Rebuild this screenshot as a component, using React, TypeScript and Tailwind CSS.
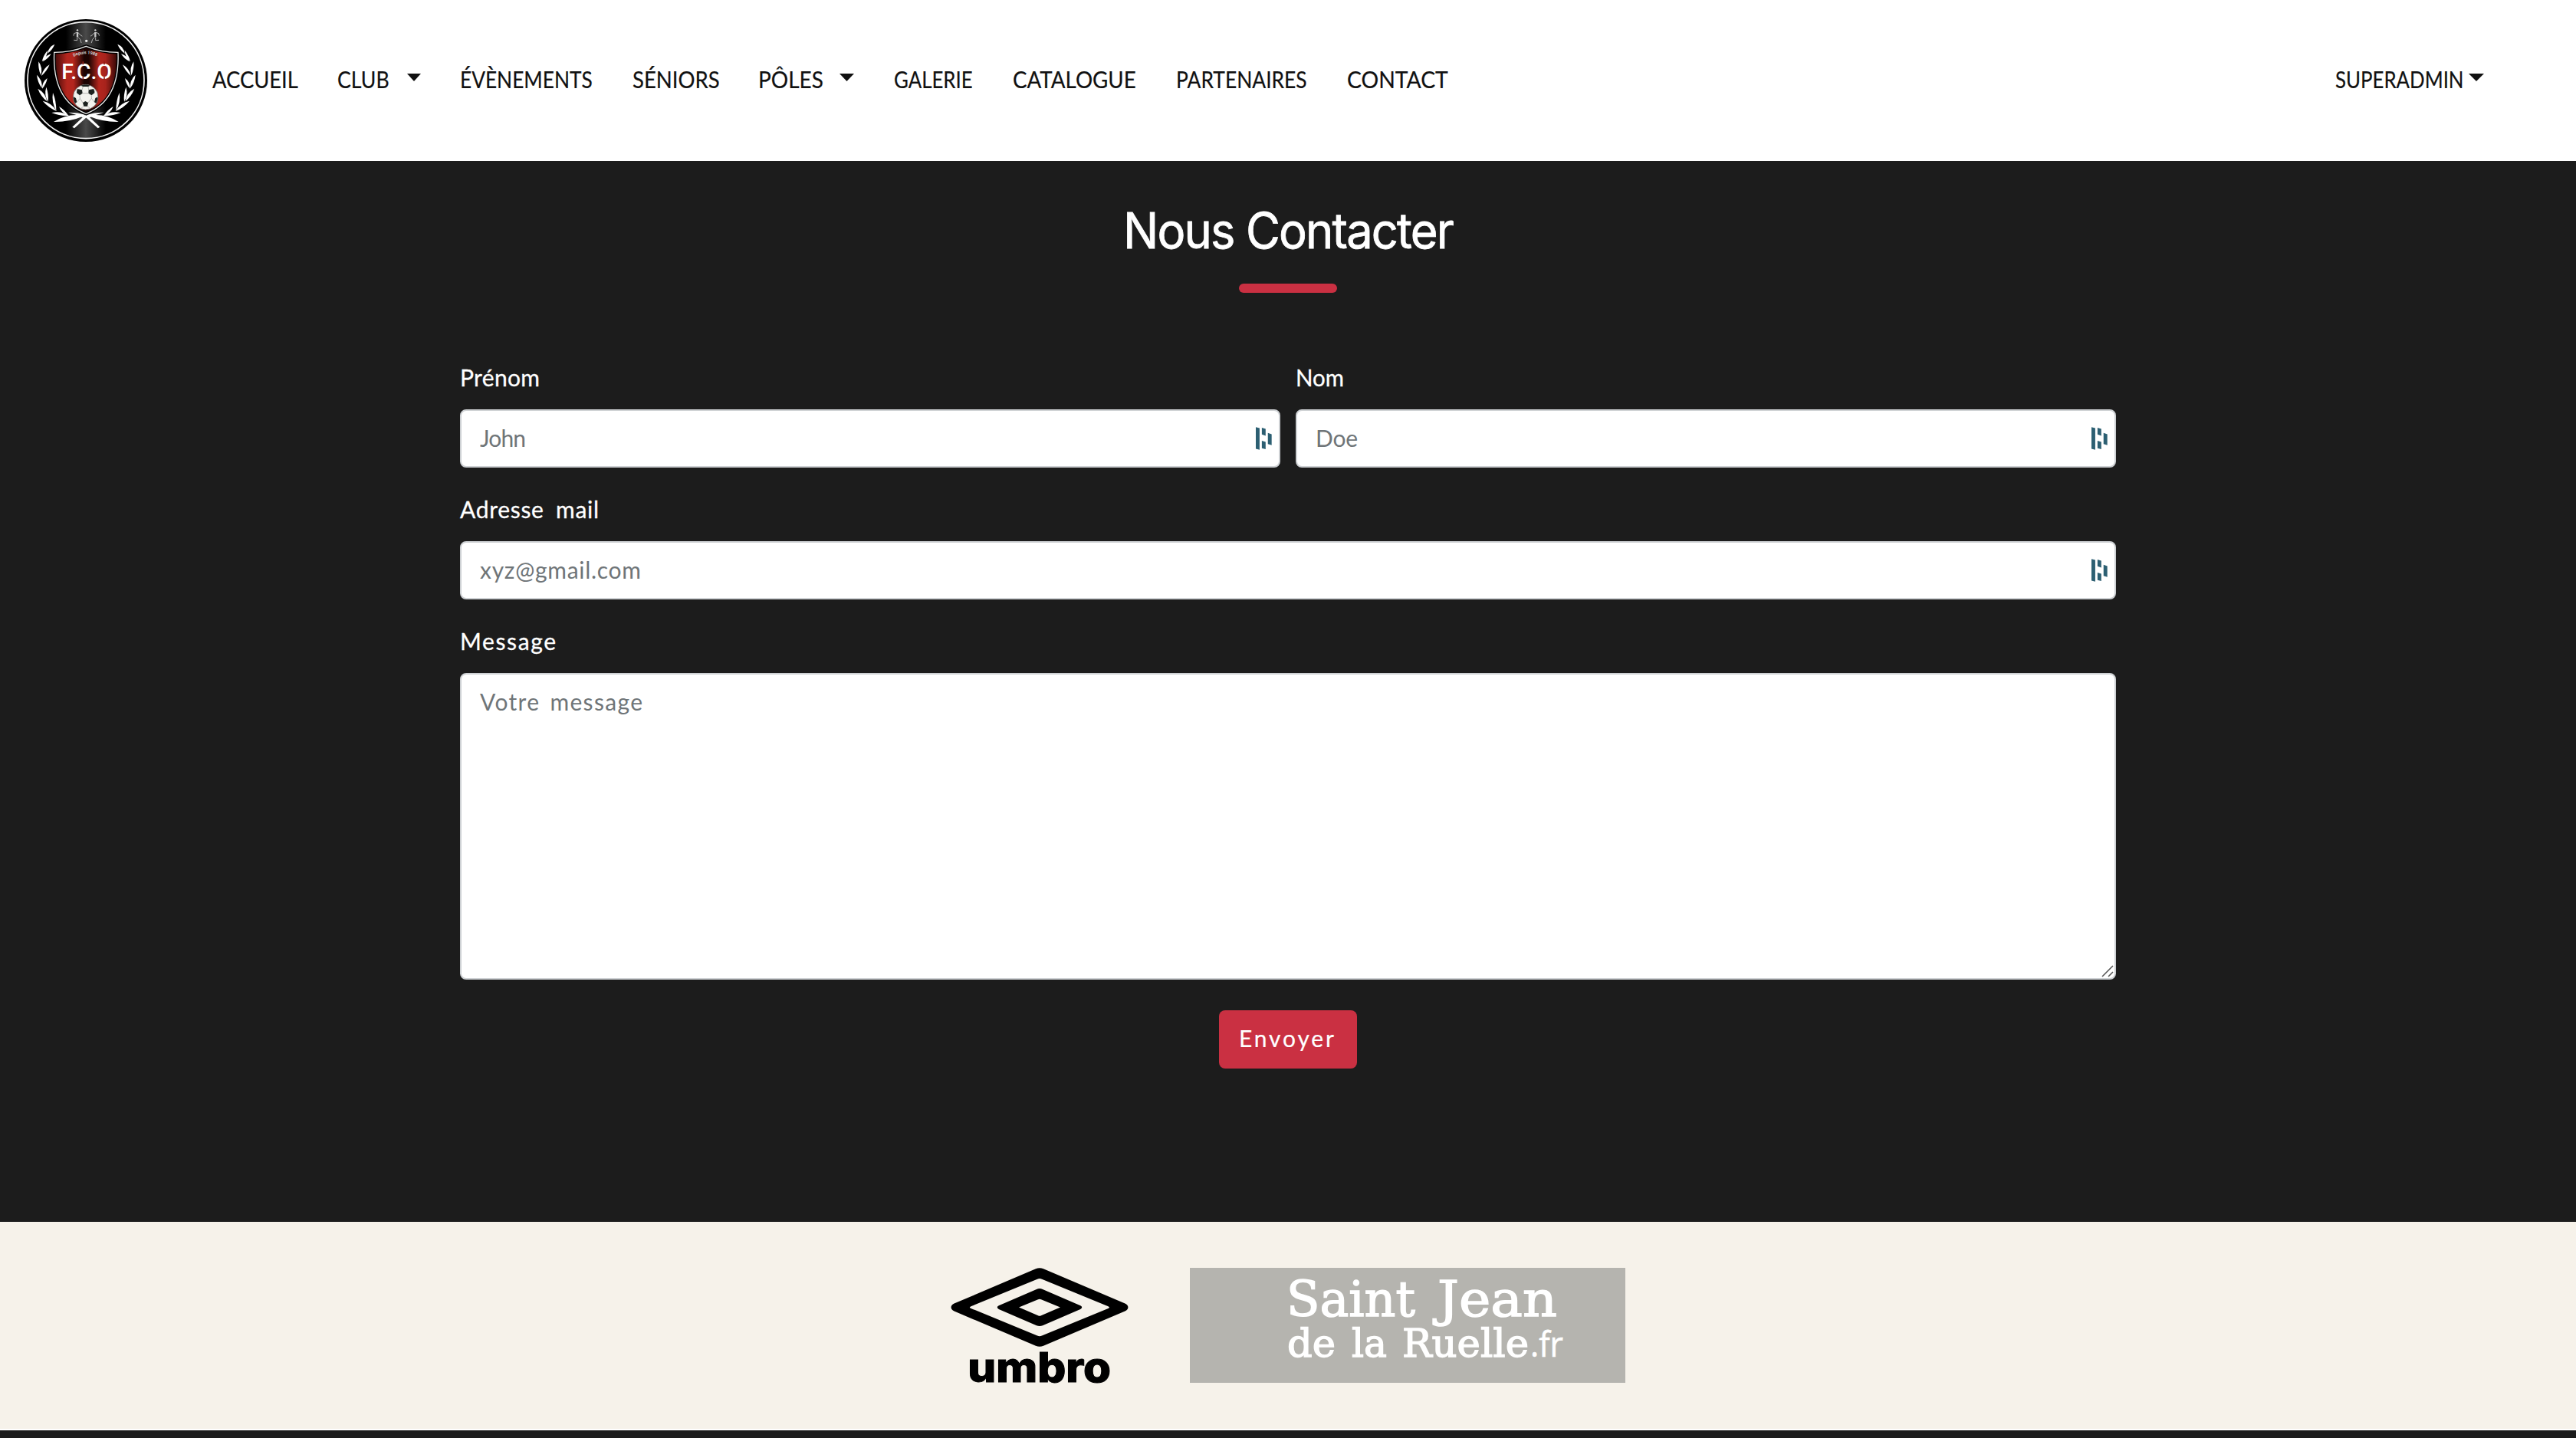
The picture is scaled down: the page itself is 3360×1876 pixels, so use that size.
import type { CSSProperties } from "react";

const pen = document.createElement("canvas").getContext("2d")!;

function naturalWidth(text: string, wordGap: number) {
  pen.font = '30px "Lato"';
  return pen.measureText(text).width - 3 + (text.split(" ").length - 1) * wordGap;
}

// Letter spacing that makes a 30px Lato string span the given width.
function track(text: string, width: number, wordGap = 0): CSSProperties {
  const spacing = (width - naturalWidth(text, wordGap)) / (text.length - 1);
  return { letterSpacing: `${spacing.toFixed(3)}px`, wordSpacing: `${wordGap}px` };
}

// Condenses strings that are too wide and opens up those that are too narrow.
function fit(text: string, width: number, wordGap: number): CSSProperties {
  const natural = naturalWidth(text, wordGap);
  if (natural > width) {
    return { transform: `scaleX(${(width / natural).toFixed(4)})`, wordSpacing: `${wordGap}px` };
  }
  return track(text, width, wordGap);
}

function Word({ text, width, gap = 0 }: { text: string; width: number; gap?: number }) {
  return (
    <span className="-ml-[2px] block origin-left whitespace-nowrap" style={{ ...fit(text, width, gap), width: width + 2 }}>
      {text}
    </span>
  );
}

function Caret({ className }: { className: string }) {
  return (
    <svg viewBox="0 0 20 10" preserveAspectRatio="none" className={className}>
      <path d="M0 0H20L10 10Z" fill="#111" />
    </svg>
  );
}

type Leaf = [number, number, number, number, number];

// base x, base y, tip x, tip y, bulge
const leaves: Leaf[] = [
  [186, 206, 214, 170, 13],
  [164, 238, 186, 194, -11],
  [167, 238, 200, 208, 12],
  [160, 292, 151, 238, -13],
  [162, 294, 194, 250, 12],
  [164, 342, 144, 290, -14],
  [165, 344, 185, 303, 12],
  [184, 394, 148, 344, -15],
  [188, 396, 181, 338, 13],
  [222, 432, 167, 392, -15],
  [220, 430, 207, 360, 13],
  [270, 450, 202, 438, -15],
  [268, 450, 231, 414, 12],
  [330, 450, 210, 474, -24],
];

function leafPath([bx, by, tx, ty, b]: Leaf) {
  const dx = tx - bx;
  const dy = ty - by;
  const len = Math.hypot(dx, dy);
  const nx = (-dy / len) * b;
  const ny = (dx / len) * b;
  const mx = bx + dx * 0.5;
  const my = by + dy * 0.5;
  return `M${bx} ${by}Q${mx - nx} ${my - ny} ${tx} ${ty}Q${mx + nx * 0.55} ${my + ny * 0.55} ${bx} ${by}Z`;
}

function Branch() {
  return (
    <g fill="#fff">
      {leaves.map((l, i) => (
        <path key={i} d={leafPath(l)} />
      ))}
      <path d="M283 494L334 446L342 453L291 499Z" />
      <path d="M334 446Q300 436 268 437Q300 446 324 457Z" />
    </g>
  );
}

function Runner() {
  return (
    <g stroke="#ccc" strokeWidth="2.5" fill="none" strokeLinecap="round" strokeLinejoin="round">
      <circle cx="303" cy="115" r="3.5" fill="#ddd" stroke="none" />
      <path d="M303 123V141" strokeWidth="7" strokeLinecap="butt" />
      <path d="M301 124L290 128L288 136M306 125L313 133L321 138" />
      <path d="M302 143L302 155L290 154M306 143L314 151L318 164" />
    </g>
  );
}

function Crest() {
  return (
    <svg viewBox="96 72 480 480" className="size-[160px]">
      <defs>
        <linearGradient id="disc" x1="0" x2="1" y1="0" y2="0">
          <stop offset="0.33" stopColor="#000" />
          <stop offset="0.5" stopColor="#4a4a4a" />
          <stop offset="0.67" stopColor="#000" />
        </linearGradient>
        <linearGradient id="shield" x1="0" x2="1" y1="0" y2="0">
          <stop offset="0" stopColor="#3a0806" />
          <stop offset="0.2" stopColor="#b3261e" />
          <stop offset="0.3" stopColor="#b3261e" />
          <stop offset="0.47" stopColor="#1c0302" />
          <stop offset="0.54" stopColor="#1c0302" />
          <stop offset="0.7" stopColor="#b3261e" />
          <stop offset="0.8" stopColor="#a8231c" />
          <stop offset="1" stopColor="#2a0504" />
        </linearGradient>
        <path id="motto" d="M288 219Q336 197 384 219" />
      </defs>
      <circle cx="336" cy="312" r="240" fill="#000" />
      <circle cx="336" cy="311" r="228" fill="url(#disc)" stroke="#f2f2f2" strokeWidth="5" />
      <Runner />
      <g transform="translate(676 0) scale(-1 1)">
        <Runner />
      </g>
      <circle cx="338" cy="157" r="5" fill="#eee" />
      <Branch />
      <g transform="translate(674 0) scale(-1 1)">
        <Branch />
      </g>
      <path
        d="M337 178Q280 202 212 202C209 275 216 395 337 442C458 395 465 275 462 202Q394 202 337 178Z"
        fill="url(#shield)"
        stroke="#000"
        strokeWidth="13"
      />
      <path
        d="M337 178Q280 202 212 202C209 275 216 395 337 442C458 395 465 275 462 202Q394 202 337 178Z"
        fill="none"
        stroke="#e8e8e8"
        strokeWidth="4"
      />
      <text fontFamily="Roboto, sans-serif" fontWeight="700" fontSize="17" fill="#ccc">
        <textPath href="#motto" textLength="94">Depuis 1988</textPath>
      </text>
      <text x="241" y="305" textLength="196" lengthAdjust="spacing" fontFamily="Roboto, sans-serif" fontWeight="500" fontSize="85" fill="#fff">
        F.C.O
      </text>
      <path d="M325 238V250M325 298V308M408 238V250M408 298V308" stroke="#8c1e17" strokeWidth="5" />
      <circle cx="335" cy="377" r="49" fill="#f3f3ee" stroke="#555" strokeWidth="2" />
      <g fill="#1b211e">
        <path d="M303 345L321 349L323 362L312 370L300 361Q299 352 303 345Z" />
        <path d="M347 349L366 345Q371 353 370 361L358 370L346 362Z" />
        <path d="M316 332Q335 325 353 332L345 336H325Z" />
        <path d="M288 376L297 381L301 397L294 401Q286 390 288 376Z" />
        <path d="M382 376L373 381L369 397L376 401Q384 390 382 376Z" />
        <path d="M324 399L334 393L345 399L342 413L328 413Z" />
      </g>
      <path
        d="M323 362H346M312 370L313 382L301 397M358 370L358 382L369 397M313 382L324 399M358 382L345 399M328 413L318 420M342 413L352 420M321 349L325 336M347 349L345 336"
        fill="none"
        stroke="#999"
        strokeWidth="2"
      />
    </svg>
  );
}

function FieldMark() {
  return (
    <svg viewBox="0 0 64 90" className="pointer-events-none absolute top-[23px] right-[11px] h-[30px] w-[21px]" fill="#2c5f72">
      <path d="M0 0L15 4V90L0 86Z" />
      <path d="M24 2L39 7V34L24 29Z" />
      <path d="M24 54L39 59V88L24 84Z" />
      <path d="M48 23L63 28V72L48 67Z" />
    </svg>
  );
}

interface FieldProps {
  label: string;
  labelWidth: number;
  hint: string;
  hintWidth: number;
  area?: boolean;
}

const box =
  "block w-full rounded-[8px] border-2 border-[#ced1d4] bg-white pr-12 pl-[24px] leading-[48px] text-[#212529] outline-none placeholder:text-[#6f7578] placeholder:opacity-100";

function Field({ label, labelWidth, hint, hintWidth, area }: FieldProps) {
  return (
    <label className="block flex-1">
      <span className="mb-[18px] block h-[48px] pl-[2px] leading-[48px] text-white [-webkit-text-stroke:0.3px_white]">
        <Word text={label} width={labelWidth} gap={7} />
      </span>
      <span className="relative block">
        {area ? (
          <>
            <textarea placeholder={hint} style={track(hint, hintWidth, 4)} className={`${box} h-[400px] resize-none pt-[11px]`} />
            <svg viewBox="0 0 16 16" className="absolute right-[3px] bottom-[3px] size-[16px]" stroke="#555" strokeWidth="1.5">
              <path d="M1 15L15 1M9 15L15 9" />
            </svg>
          </>
        ) : (
          <>
            <input placeholder={hint} style={track(hint, hintWidth, 4)} className={`${box} h-[76px] pb-[3px]`} />
            <FieldMark />
          </>
        )}
      </span>
    </label>
  );
}

function Umbro() {
  return (
    <svg viewBox="121 221 696 451" className="h-[150px] w-[232px] overflow-visible">
      <path
        fillRule="evenodd"
        d="M454 225Q469 219 484 225L804 361Q816 367 816 376Q816 385 804 391L484 527Q469 533 454 527L134 391Q122 385 122 376Q122 367 134 361ZM460 265L200 372Q190 376 200 380L460 487Q469 491 478 487L738 380Q747 376 738 372L478 265Q469 261 460 265Z"
      />
      <path
        fillRule="evenodd"
        d="M457 305Q469 300 481 305L629 369Q635 372 635 376Q635 380 629 383L481 447Q469 452 457 447L309 383Q303 380 303 376Q303 372 309 369ZM463 345L388 376L463 408Q469 411 475 408L550 376L475 345Q469 342 463 345Z"
      />
      <text
        x="187"
        y="670"
        fontFamily="Inter, sans-serif"
        fontWeight="800"
        fontSize="161"
        textLength="562"
        lengthAdjust="spacingAndGlyphs"
        stroke="#000"
        strokeWidth="3"
      >
        umbro
      </text>
    </svg>
  );
}

function SaintJean() {
  return (
    <svg
      viewBox="0 0 568 150"
      className="h-[150px] w-[568px] bg-[#b5b4af]"
      fill="#fff"
      stroke="#fff"
      strokeWidth="1.4"
      fontFamily="'DejaVu Serif', serif"
    >
      <g fontSize="63">
        <text x="126" y="63" textLength="168" lengthAdjust="spacingAndGlyphs">Saint</text>
        <text x="323" y="63" textLength="156" lengthAdjust="spacingAndGlyphs">Jean</text>
      </g>
      <g fontSize="51">
        <text x="127" y="116" textLength="63" lengthAdjust="spacingAndGlyphs">de</text>
        <text x="211" y="116" textLength="46" lengthAdjust="spacingAndGlyphs">la</text>
        <text x="277" y="116" textLength="165" lengthAdjust="spacingAndGlyphs">Ruelle</text>
      </g>
      <text x="444" y="116" fontSize="46" textLength="43" strokeWidth="0.6" lengthAdjust="spacingAndGlyphs" fontFamily="'Open Sans', sans-serif">
        .fr
      </text>
    </svg>
  );
}

export default function App() {
  return (
    <div className="flex h-[1876px] w-[3360px] flex-col overflow-hidden bg-[#1c1c1c] font-['Lato',sans-serif] text-[30px]">
      <header className="flex h-[210px] shrink-0 items-center bg-white pr-[120px] pl-[32px] text-[#111]">
        <Crest />
        <nav className="ml-[87px] flex flex-1 items-center pb-[5px] leading-[48px] [-webkit-text-stroke:0.2px_#111]">
          <Word text="ACCUEIL" width={109} />
          <div className="ml-[54px] flex items-center">
            <Word text="CLUB" width={65} />
            <Caret className="mb-[3px] ml-[24px] h-[10px] w-[18px]" />
          </div>
          <div className="ml-[53px] flex items-center gap-[55px]">
            <Word text="ÉVÈNEMENTS" width={170} />
            <Word text="SÉNIORS" width={111} />
          </div>
          <div className="ml-[53px] flex items-center">
            <Word text="PÔLES" width={82} />
            <Caret className="mb-[3px] ml-[22px] h-[10px] w-[19px]" />
          </div>
          <div className="ml-[54px] flex items-center gap-[55px]">
            <Word text="GALERIE" width={100} />
            <Word text="CATALOGUE" width={158} />
            <Word text="PARTENAIRES" width={168} />
            <Word text="CONTACT" width={129} />
          </div>
          <div className="ml-auto flex items-center">
            <Word text="SUPERADMIN" width={165} />
            <Caret className="mb-[3px] ml-[7px] h-[10px] w-[20px]" />
          </div>
        </nav>
      </header>

      <main className="flex h-[1384px] shrink-0 flex-col items-center pt-[52px]">
        <h1 className="h-[77px] origin-center scale-x-[0.96] font-['Inter',sans-serif] text-[64px] leading-[77px] tracking-[-1.9px] text-white [-webkit-text-stroke:0.8px_white]">
          Nous Contacter
        </h1>
        <div className="mt-[31px] h-[12px] w-[128px] rounded-full bg-[#ca3042]" />
        <form className="mt-[86px] flex w-[2160px] flex-col gap-[30px]">
          <div className="flex gap-[20px]">
            <Field label="Prénom" labelWidth={101} hint="John" hintWidth={57} />
            <Field label="Nom" labelWidth={60} hint="Doe" hintWidth={52} />
          </div>
          <Field label="Adresse mail" labelWidth={178} hint="xyz@gmail.com" hintWidth={207} />
          <Field label="Message" labelWidth={122} hint="Votre message" hintWidth={209} area />
          <button
            type="button"
            className="mt-[10px] h-[76px] w-[180px] self-center rounded-[8px] bg-[#ca3042] pb-[4px] pl-[28px] text-left text-white [-webkit-text-stroke:0.2px_white]"
          >
            <Word text="Envoyer" width={121} />
          </button>
        </form>
      </main>

      <footer className="flex h-[272px] shrink-0 items-start justify-center gap-[80px] border-b-2 border-white bg-[#f6f2ea] pt-[60px]">
        <Umbro />
        <SaintJean />
      </footer>
    </div>
  );
}
